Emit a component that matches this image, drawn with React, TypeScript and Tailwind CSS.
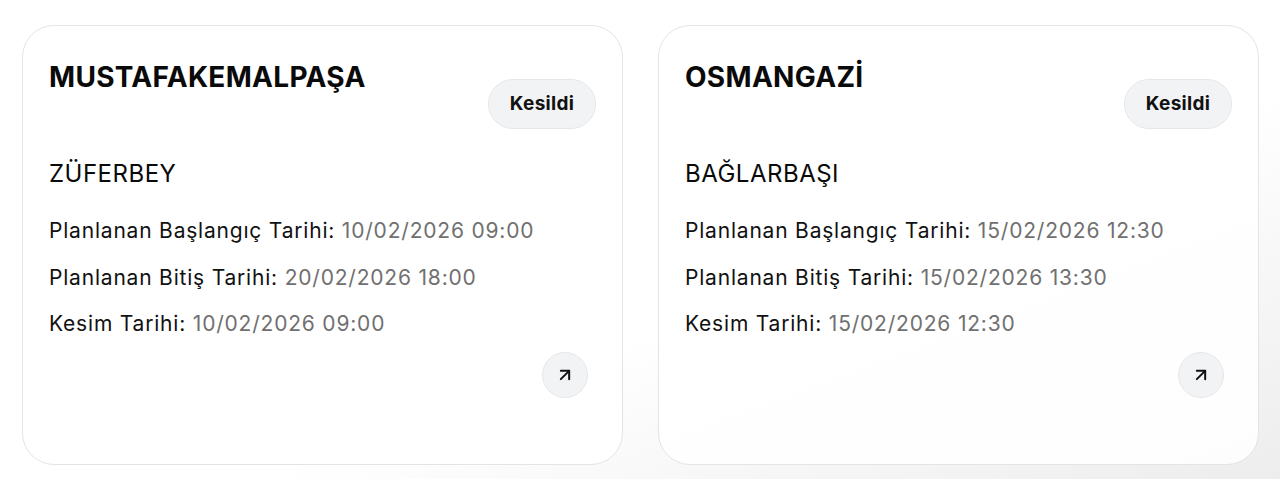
import React from 'react';
import { ArrowUpRight } from 'lucide-react';

type Outage = {
  district: string;
  neighborhood: string;
  start: string;
  end: string;
  cut: string;
};

const outages: Outage[] = [
  {
    district: 'MUSTAFAKEMALPAŞA',
    neighborhood: 'ZÜFERBEY',
    start: '10/02/2026 09:00',
    end: '20/02/2026 18:00',
    cut: '10/02/2026 09:00',
  },
  {
    district: 'OSMANGAZİ',
    neighborhood: 'BAĞLARBAŞI',
    start: '15/02/2026 12:30',
    end: '15/02/2026 13:30',
    cut: '15/02/2026 12:30',
  },
];

const Row: React.FC<{ label: string; value: string }> = ({ label, value }) => (
  <p className="text-[21px] leading-[28px] tracking-[0.8px] text-[#111111]">
    {label}: <span className="text-[#707070]">{value}</span>
  </p>
);

const OutageCard: React.FC<{ item: Outage }> = ({ item }) => (
  <div className="flex h-[440px] w-[601px] flex-col rounded-[32px] border border-[#e4e4e4] bg-white/90 px-[26px] pt-[33px]">
    <div className="flex items-start justify-between">
      <h2 className="text-[28px] font-bold leading-[36px] tracking-[0.3px] text-[#0a0a0a]">{item.district}</h2>
      <span className="mt-[20px] flex h-[50px] w-[108px] items-center justify-center rounded-full border border-[#e6e7ea] bg-[#f2f3f5] text-[19px] font-bold tracking-[0.3px] text-[#111111]">
        Kesildi
      </span>
    </div>
    <h3 className="mt-[29px] text-[24px] leading-[32px] tracking-[0.5px] text-[#0a0a0a]">{item.neighborhood}</h3>
    <div className="mt-[27px] flex flex-col gap-[18.5px]">
      <Row label="Planlanan Başlangıç Tarihi" value={item.start} />
      <Row label="Planlanan Bitiş Tarihi" value={item.end} />
      <Row label="Kesim Tarihi" value={item.cut} />
    </div>
    <div className="mt-[14px] flex justify-end pr-[8px]">
      <button className="flex h-[46px] w-[46px] items-center justify-center rounded-full border border-[#e6e7ea] bg-[#f2f3f5] text-[#111111]">
        <ArrowUpRight size={20} strokeWidth={2.4} />
      </button>
    </div>
  </div>
);

export default function App() {
  return (
    <div
      className="flex h-[479px] w-[1280px] gap-[35px] bg-gradient-to-br from-white from-60% to-[#ededed] pl-[22px] pt-[25px]"
      style={{ fontFamily: 'Inter, "Noto Sans", sans-serif' }}
    >
      {outages.map((o) => (
        <OutageCard key={o.district} item={o} />
      ))}
    </div>
  );
}
